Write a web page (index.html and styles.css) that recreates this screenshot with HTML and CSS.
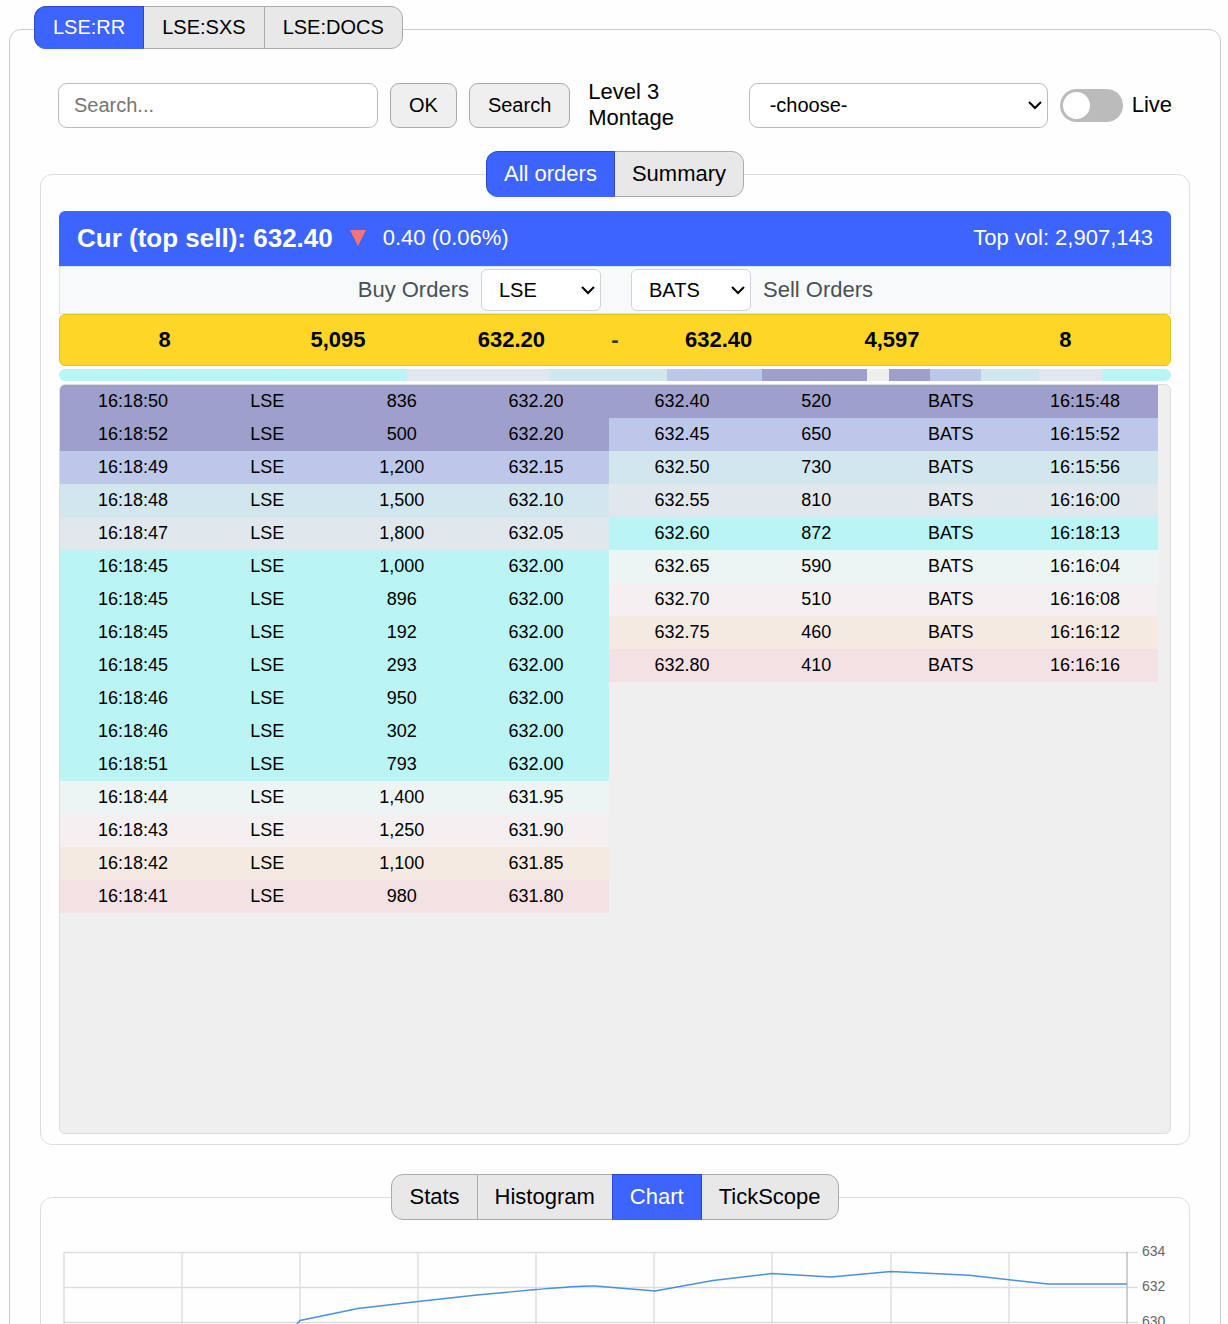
FILE: index.html
```html
<!DOCTYPE html>
<html lang="en">
<head>
<meta charset="utf-8">
<title>Level 3 Montage</title>
<link rel="stylesheet" href="styles.css">
</head>
<body>
<main class="app">
  <nav class="tabs tabs-symbols" aria-label="Symbols">
    <button type="button" class="tab active">LSE:RR</button>
    <button type="button" class="tab">LSE:SXS</button>
    <button type="button" class="tab">LSE:DOCS</button>
  </nav>
  <div class="workspace">
    <form class="toolbar">
      <input class="field search" type="text" placeholder="Search..." aria-label="Symbol">
      <button type="button" class="btn">OK</button>
      <button type="button" class="btn">Search</button>
      <label class="toolbar-title" for="montage">Level 3 Montage</label>
      <select class="field montage" id="montage"><option>-choose-</option></select>
      <label class="live"><input class="switch" type="checkbox" role="switch">Live</label>
    </form>

    <nav class="tabs" aria-label="Order views">
      <button type="button" class="tab active">All orders</button>
      <button type="button" class="tab">Summary</button>
    </nav>
    <section class="panel">
      <header class="quote">
        <strong class="quote-price">Cur (top sell): 632.40</strong>
        <svg class="quote-arrow" viewBox="0 0 16 16" aria-hidden="true"><path d="M0 0H16L8 16Z"/></svg>
        <span>0.40 (0.06%)</span>
        <span class="quote-volume">Top vol: 2,907,143</span>
      </header>
      <div class="venues">
        <label class="venue buy">Buy Orders <select class="venue-select"><option>LSE</option></select></label>
        <label class="venue"><select class="venue-select"><option>BATS</option></select> Sell Orders</label>
      </div>
      <div class="best">
        <span>8</span><span>5,095</span><span>632.20</span><span class="dash">-</span><span>632.40</span><span>4,597</span><span>8</span>
      </div>
      <div class="depth">
        <i class="l5" style="flex-grow:4426"></i>
        <i class="l4" style="flex-grow:1800"></i>
        <i class="l3" style="flex-grow:1500"></i>
        <i class="l2" style="flex-grow:1200"></i>
        <i class="l1" style="flex-grow:1336"></i>
        <i class="spread"></i>
        <i class="l1" style="flex-grow:520"></i>
        <i class="l2" style="flex-grow:650"></i>
        <i class="l3" style="flex-grow:730"></i>
        <i class="l4" style="flex-grow:810"></i>
        <i class="l5" style="flex-grow:872"></i>
      </div>
      <div class="book">
        <div class="side">
          <table class="orders">
            <tbody>
              <tr class="l1"><td>16:18:50</td><td>LSE</td><td>836</td><td>632.20</td></tr>
              <tr class="l1"><td>16:18:52</td><td>LSE</td><td>500</td><td>632.20</td></tr>
              <tr class="l2"><td>16:18:49</td><td>LSE</td><td>1,200</td><td>632.15</td></tr>
              <tr class="l3"><td>16:18:48</td><td>LSE</td><td>1,500</td><td>632.10</td></tr>
              <tr class="l4"><td>16:18:47</td><td>LSE</td><td>1,800</td><td>632.05</td></tr>
              <tr class="l5"><td>16:18:45</td><td>LSE</td><td>1,000</td><td>632.00</td></tr>
              <tr class="l5"><td>16:18:45</td><td>LSE</td><td>896</td><td>632.00</td></tr>
              <tr class="l5"><td>16:18:45</td><td>LSE</td><td>192</td><td>632.00</td></tr>
              <tr class="l5"><td>16:18:45</td><td>LSE</td><td>293</td><td>632.00</td></tr>
              <tr class="l5"><td>16:18:46</td><td>LSE</td><td>950</td><td>632.00</td></tr>
              <tr class="l5"><td>16:18:46</td><td>LSE</td><td>302</td><td>632.00</td></tr>
              <tr class="l5"><td>16:18:51</td><td>LSE</td><td>793</td><td>632.00</td></tr>
              <tr class="l6"><td>16:18:44</td><td>LSE</td><td>1,400</td><td>631.95</td></tr>
              <tr class="l7"><td>16:18:43</td><td>LSE</td><td>1,250</td><td>631.90</td></tr>
              <tr class="l8"><td>16:18:42</td><td>LSE</td><td>1,100</td><td>631.85</td></tr>
              <tr class="l9"><td>16:18:41</td><td>LSE</td><td>980</td><td>631.80</td></tr>
            </tbody>
          </table>
        </div>
        <div class="side">
          <table class="orders">
            <tbody>
              <tr class="l1"><td>632.40</td><td>520</td><td>BATS</td><td>16:15:48</td></tr>
              <tr class="l2"><td>632.45</td><td>650</td><td>BATS</td><td>16:15:52</td></tr>
              <tr class="l3"><td>632.50</td><td>730</td><td>BATS</td><td>16:15:56</td></tr>
              <tr class="l4"><td>632.55</td><td>810</td><td>BATS</td><td>16:16:00</td></tr>
              <tr class="l5"><td>632.60</td><td>872</td><td>BATS</td><td>16:18:13</td></tr>
              <tr class="l6"><td>632.65</td><td>590</td><td>BATS</td><td>16:16:04</td></tr>
              <tr class="l7"><td>632.70</td><td>510</td><td>BATS</td><td>16:16:08</td></tr>
              <tr class="l8"><td>632.75</td><td>460</td><td>BATS</td><td>16:16:12</td></tr>
              <tr class="l9"><td>632.80</td><td>410</td><td>BATS</td><td>16:16:16</td></tr>
            </tbody>
          </table>
        </div>
      </div>
    </section>

    <nav class="tabs tabs-next" aria-label="Analysis views">
      <button type="button" class="tab">Stats</button>
      <button type="button" class="tab">Histogram</button>
      <button type="button" class="tab active">Chart</button>
      <button type="button" class="tab">TickScope</button>
    </nav>
    <section class="panel">
      <svg class="chart" viewBox="0 0 1112 240" role="img" aria-label="Price chart">
        <path class="grid" d="M5 18.5H1079M5 53.5H1079M5 88.5H1079M5 123.5H1079M5 158.5H1079M5 193.5H1079M5 18V194M123 18V194M241 18V194M359 18V194M477 18V194M595 18V194M713 18V194M832 18V194M950 18V194"/>
        <path class="axis" d="M1068 18V194"/>
        <path class="price" d="M181 150L238 90L241 86.500L299 74.500L359 67.500L418 61L477 55.500C500 53.500 520 51.500 536 52L596 57L654 46.500L713 39.500L772 43L832 37.500L910 41.300L989 50H1068"/>
        <text x="1083" y="22">634</text>
        <text x="1083" y="57">632</text>
        <text x="1083" y="92">630</text>
      </svg>
    </section>
  </div>
</main>
</body>
</html>
```
FILE: styles.css
```css
* { box-sizing: border-box; }

body {
  margin: 0;
  background: #fefefe;
  color: #000;
  font: 22px/26px "Liberation Sans", Arial, sans-serif;
}

button, input, select { font: inherit; color: inherit; }

select {
  appearance: none;
  background: #fff url("data:image/svg+xml,%3Csvg xmlns='http://www.w3.org/2000/svg' width='14' height='10'%3E%3Cpath d='M1 2l6 6 6-6' fill='none' stroke='black' stroke-width='2'/%3E%3C/svg%3E") no-repeat right 5px center;
}

.app {
  height: 100vh;
  overflow: hidden;
  padding: 6px 7px 0 9px;
}

.workspace {
  min-height: 100vh;
  padding: 49px 30px 30px;
  border: 1px solid #ccc;
  border-radius: 12px;
}

/* Tab strips straddle the top border of the panel below them */
.tabs {
  position: relative;
  display: flex;
  justify-content: center;
  margin-bottom: -23px;
}

.tab {
  height: 46px;
  margin-left: -1px;
  padding: 0 17px;
  border: 1px solid #aaa;
  background: #e8e8e8;
}

.tab:first-child {
  margin-left: 0;
  border-radius: 12px 0 0 12px;
}

.tab:last-child { border-radius: 0 12px 12px 0; }

.tab.active {
  z-index: 1;
  background: #3d64ff;
  border-color: #2a4bc4;
  border-bottom-color: #3d64ff;
  color: #fff;
}

.tabs-symbols {
  justify-content: flex-start;
  margin-bottom: -20px;
  padding-left: 25px;
}

.tabs-symbols .tab {
  height: 43px;
  padding: 0 18px 2px;
  font-size: 20px;
}

.tabs-next { margin-top: 29px; }

.toolbar {
  display: flex;
  align-items: center;
  gap: 12px;
  margin-bottom: 20px;
  padding: 0 18px;
}

.field, .btn {
  height: 45px;
  border: 1px solid #bbb;
  border-radius: 9px;
  background-color: #fff;
  font-size: 20px;
}

.btn {
  padding: 0 18px;
  border-color: #aaa;
  background: #efefef;
}

.search { width: 320px; padding: 0 15px; }
.search::placeholder { color: #757575; }
.montage { width: 299px; padding: 0 20px; }
.toolbar-title { flex: 1; padding-left: 6px; }

.live {
  display: flex;
  align-items: center;
  gap: 9px;
}

.switch {
  appearance: none;
  display: flex;
  width: 63px;
  height: 33px;
  margin: 0;
  padding: 3px;
  border-radius: 17px;
  background: #bbb;
}

.switch::before {
  content: "";
  width: 27px;
  height: 27px;
  border-radius: 50%;
  background: #fff;
}

.switch:checked { justify-content: flex-end; background: #3d64ff; }

.panel {
  padding: 36px 18px 10px;
  border: 1px solid #ddd;
  border-radius: 12px;
}

.quote {
  display: flex;
  align-items: center;
  gap: 17px;
  height: 55px;
  padding: 0 18px 2px;
  border-radius: 6px 6px 0 0;
  background: #3d64ff;
  color: #fff;
}

.quote-price { font-size: 26px; }
.quote-arrow { width: 16px; height: 16px; fill: #fa7373; }
.quote-volume { margin-left: auto; }

.venues {
  display: grid;
  grid-template-columns: 1fr 1fr;
  gap: 30px;
  height: 48px;
  padding-left: 2px;
  border: 1px solid #dee2e6;
  background: #f8f9fb;
  color: #495057;
}

.venue {
  display: flex;
  align-items: center;
  gap: 12px;
}

.venue.buy { justify-content: flex-end; }

.venue-select {
  width: 120px;
  height: 42px;
  padding: 0 17px;
  border: 1px solid #ced4da;
  border-radius: 6px;
  color: #000;
  font-size: 20px;
}

.best {
  display: grid;
  grid-template-columns: repeat(3, 1fr) 34px repeat(3, 1fr);
  align-items: center;
  height: 52px;
  padding: 0 18px;
  border: 1px solid #e6c121;
  border-radius: 6px;
  background: #fdd628;
  font-weight: bold;
  text-align: center;
}

.dash { color: #333; }

.depth {
  display: flex;
  height: 12px;
  margin: 3px 0;
  overflow: hidden;
  border-radius: 6px;
}

.spread { width: 22px; background: #efefef; }

.book {
  display: flex;
  height: 750px;
  padding-right: 12px;
  overflow: hidden;
  border: 1px solid #ddd;
  border-radius: 6px;
  background: #efefef;
}

.side { flex: 1; }

.orders {
  width: 100%;
  table-layout: fixed;
  border-collapse: collapse;
  font-size: 18px;
  line-height: 33px;
  text-align: center;
}

.orders td { height: 33px; padding: 0; }
.orders td:first-child { width: 140px; padding-left: 6px; }
.orders td:last-child { width: 140px; padding-right: 6px; }

.l1 { background: #9e9fcb; }
.l2 { background: #bdc7ea; }
.l3 { background: #d2e6ee; }
.l4 { background: #e0e8ee; }
.l5 { background: #baf4f4; }
.l6 { background: #edf4f4; }
.l7 { background: #f4f0f2; }
.l8 { background: #f4eae2; }
.l9 { background: #f4e1e4; }

.chart { display: block; width: 100%; height: auto; }
.chart text { fill: #666; font-size: 14px; }
.grid { stroke: #ddd; stroke-width: 1.4; }
.axis { stroke: #bbb; stroke-width: 1.4; }
.price { fill: none; stroke: #4a90e2; stroke-width: 1.4; }
```
